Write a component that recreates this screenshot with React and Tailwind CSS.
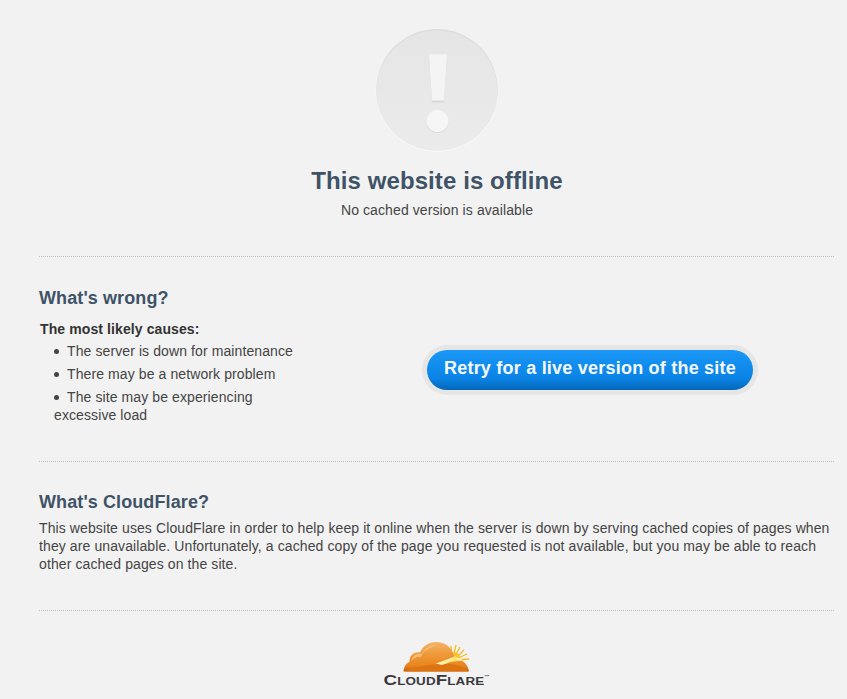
import React from 'react';

function OfflineIcon() {
  return (
    <svg width="124" height="124" viewBox="0 0 124 124" className="block">
      <defs>
        <linearGradient id="ring" x1="0" y1="0" x2="0" y2="1">
          <stop offset="0" stopColor="#dcdcdc" />
          <stop offset="1" stopColor="#eeeeee" />
        </linearGradient>
        <linearGradient id="disc" x1="0" y1="0" x2="0" y2="1">
          <stop offset="0" stopColor="#e5e5e5" />
          <stop offset="1" stopColor="#ebebeb" />
        </linearGradient>
      </defs>
      <circle cx="62" cy="62.5" r="61.5" fill="#f8f8f8" />
      <circle cx="62" cy="62" r="61" fill="url(#ring)" />
      <circle cx="62" cy="62.5" r="60" fill="url(#disc)" />
      <path d="M54 27.5 L72 27.5 L69 73.5 L57 73.5 Z" fill="#d8d8d8" transform="translate(0 1)" />
      <path d="M54 26.5 L72 26.5 L69 72.5 L57 72.5 Z" fill="#f4f4f4" />
      <circle cx="62.5" cy="94" r="11" fill="#d8d8d8" />
      <circle cx="62.5" cy="93" r="11" fill="#f6f6f6" />
    </svg>
  );
}

function Logo() {
  return (
    <div className="flex flex-col items-center">
      <svg width="76" height="36" viewBox="0 0 76 36" className="block">
        <defs>
          <linearGradient id="cloud" x1="0" y1="0" x2="0" y2="1">
            <stop offset="0" stopColor="#f4b266" />
            <stop offset="0.4" stopColor="#f09a3a" />
            <stop offset="0.8" stopColor="#e9861f" />
            <stop offset="1" stopColor="#c9600c" />
          </linearGradient>
        </defs>
        <g stroke="#f5b920" strokeWidth="1.3">
          <path d="M54 20 L53 8" />
          <path d="M55 20 L58 7" />
          <path d="M56 20 L62 9" />
          <path d="M57 21 L66 12" />
          <path d="M58 21 L69 16" />
          <path d="M58 22 L71 21" />
        </g>
        <circle cx="56" cy="20" r="6" fill="#f8c22c" />
        <path d="M5.5 33.5 C6 28 8 25.5 11.5 24 C11 18 16 13.5 22 14.5 C25 8 31 4 38 4 C46 4 52 8 54.5 14 C56 17 57 20 58 22 C64 21 70 26 71 33.5 Z" fill="url(#cloud)" />
        <path d="M7 33.5 C14 29 28 27 42 26 C52 25 62 26 70 33.5 Z" fill="#dd7412" />
        <path d="M13 23 C15 17 19 15 24 16 C27 10 33 6.5 40 6.5 C32 9 25 13 23 19 C19 18 16 20 13 23 Z" fill="#f9cb93" opacity="0.75" />
        <path d="M38 25.5 L57 18.5 L66 22.5 L55 23 L44 27 Z" fill="#fff0a8" />
        <path d="M57 18 L52 24 L60 23 Z" fill="#fde26a" />
      </svg>
      <div className="mt-[-1px] scale-x-[1.34] text-[14px] leading-[14px] font-bold text-[#39393d] [font-variant:small-caps]">
        CloudFlare<span className="align-top text-[4px] leading-[8px]">™</span>
      </div>
    </div>
  );
}

function Bullet() {
  return <span className="mr-[8px] inline-block h-[5px] w-[5px] rounded-full bg-[#444] align-[2px]" />;
}

export default function App() {
  return (
    <div className="h-[699px] overflow-hidden bg-[#f2f2f2] font-['Liberation_Sans',Arial,sans-serif] text-[14px] tracking-[0.1px] text-[#444]">
      <div className="mr-[13px] ml-[39px]">
        <div className="flex flex-col items-center pt-[28px]">
          <OfflineIcon />
          <h1 className="mt-[13px] ml-[1px] text-[24px] leading-[32px] font-bold tracking-[0.09px] text-[#3f5367]">This website is offline</h1>
          <p className="mt-[3px] ml-[1px] text-[14px] leading-[20px]">No cached version is available</p>
        </div>

        <div className="mt-[36px] flex h-[205px] border-t border-dotted border-[#bdbdbd]">
          <div className="w-[270px]">
            <h2 className="mt-[29px] text-[18px] leading-[24px] font-bold text-[#3f5367]">What's wrong?</h2>
            <p className="mt-[10px] ml-[1px] leading-[18px] font-bold text-[#333]">The most likely causes:</p>
            <ul className="mt-[4px] ml-[15px] leading-[18px]">
              <li className="mb-[5px]"><Bullet />The server is down for maintenance</li>
              <li className="mb-[5px]"><Bullet />There may be a network problem</li>
              <li><Bullet />The site may be experiencing excessive load</li>
            </ul>
          </div>
          <a className="mt-[88px] ml-[113px] h-[50px] rounded-full bg-[#e6e6e6] p-[5px]">
            <span className="block h-[40px] w-[326px] rounded-full bg-[linear-gradient(#1a97f7,#0a84e6_70%,#0567b8)] text-center text-[18px] leading-[37px] font-bold tracking-[0.22px] text-[#f4f8fb]">
              Retry for a live version of the site
            </span>
          </a>
        </div>

        <div className="h-[149px] border-t border-dotted border-[#bdbdbd]">
          <h2 className="mt-[28px] text-[18px] leading-[24px] font-bold text-[#3f5367]">What's CloudFlare?</h2>
          <p className="mt-[5px] w-[795px] text-[14px] leading-[18px]">
            This website uses CloudFlare in order to help keep it online when the server is down by serving cached copies of pages when they are unavailable. Unfortunately, a cached copy of the page you requested is not available, but you may be able to reach other cached pages on the site.
          </p>
        </div>

        <div className="flex justify-center border-t border-dotted border-[#bdbdbd] pt-[27px]">
          <Logo />
        </div>
      </div>
    </div>
  );
}
